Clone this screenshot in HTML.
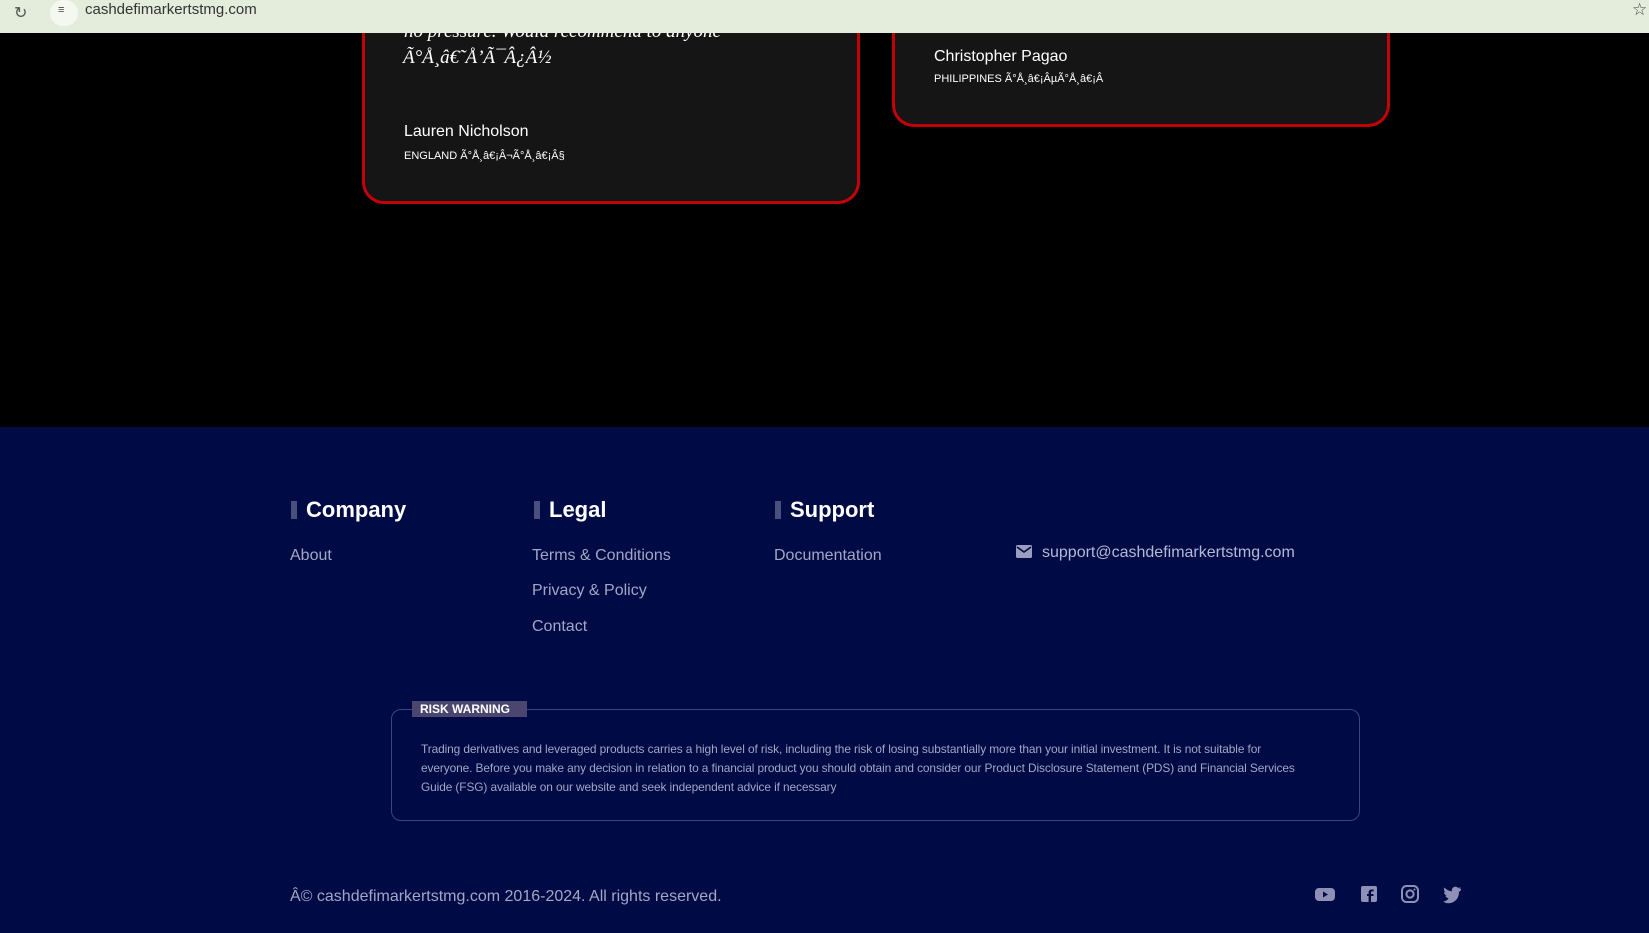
<!DOCTYPE html>
<html><head><meta charset="utf-8"><style>
*{margin:0;padding:0;box-sizing:border-box}
body{width:1649px;height:933px;overflow:hidden;background:#000;font-family:"Liberation Sans",sans-serif;position:relative}
.abs{position:absolute;white-space:nowrap}
.bar{position:absolute;left:0;top:0;width:1649px;height:33px;background:#e4ecdc;z-index:5}
.card{position:absolute;background:#151515;border:3px solid #c4000a;border-top:none;border-radius:0 0 22px 22px}
.nm{color:#fff;font-size:16px}
.cn{color:#fff;font-size:11px}
footer{position:absolute;left:0;top:427px;width:1649px;height:506px;background:#000a45}
.h{color:#fff;font-size:22px;font-weight:bold}
.h::before{content:"";position:absolute;left:-15px;top:4px;width:6px;height:18px;background:#4a4f7e}
.l{color:#a3a6c4;font-size:16px}
</style></head><body>
<div class="bar">
<div class="abs" style="left:14px;top:3px;font-size:16px;color:#555">&#8635;</div>
<div class="abs" style="left:50px;top:0;width:28px;height:26px;border-radius:13px;background:#f5f8f0"></div>
<div class="abs" style="left:58px;top:4px;font-size:11px;color:#444">&#8801;</div>
<div class="abs" style="left:85px;top:1px;font-size:15px;color:#333">cashdefimarkertstmg.com</div>
<div class="abs" style="left:1632px;top:0;font-size:17px;color:#444">&#9734;</div>
</div>
<div class="card" style="left:362px;top:0;width:498px;height:204px"></div>
<div class="card" style="left:892px;top:0;width:498px;height:127px"></div>
<div class="abs" style="left:404px;top:21px;color:#fff;font-family:'Liberation Serif',serif;font-style:italic;font-size:19px">no pressure. Would recommend to anyone</div>
<div class="abs" style="left:403px;top:47px;color:#fff;font-family:'Liberation Serif',serif;font-style:italic;font-size:19px">Ã°Å¸â€˜Å’Ã¯Â¿Â½</div>
<div class="abs nm" style="left:404px;top:123px">Lauren Nicholson</div>
<div class="abs cn" style="left:404px;top:150px">ENGLAND Ã°Å¸â€¡Â¬Ã°Å¸â€¡Â§</div>
<div class="abs nm" style="left:934px;top:48px">Christopher Pagao</div>
<div class="abs cn" style="left:934px;top:73px">PHILIPPINES Ã°Å¸â€¡ÂµÃ°Å¸â€¡Â­</div>
<footer>
<div class="abs h" style="left:306px;top:70px">Company</div>
<div class="abs h" style="left:549px;top:70px">Legal</div>
<div class="abs h" style="left:790px;top:70px">Support</div>
<div class="abs l" style="left:290px;top:120px">About</div>
<div class="abs l" style="left:532px;top:120px">Terms &amp; Conditions</div>
<div class="abs l" style="left:532px;top:155px">Privacy &amp; Policy</div>
<div class="abs l" style="left:532px;top:191px">Contact</div>
<div class="abs l" style="left:774px;top:120px">Documentation</div>
<svg class="abs" style="left:1016px;top:118px" width="16" height="13" viewBox="0 0 16 13"><rect width="16" height="13" rx="1.5" fill="#9a9dbd"/><path d="M1 2l7 5 7-5" stroke="#000a45" stroke-width="1.6" fill="none"/></svg>
<div class="abs l" style="left:1042px;top:117px;color:#b5b8d4">support@cashdefimarkertstmg.com</div>
<div class="abs" style="left:391px;top:282px;width:969px;height:112px;border:1px solid #3f4480;border-radius:10px"></div>
<div class="abs" style="left:412px;top:274px;width:115px;height:16px;background:#4a4670;color:#fff;font-size:12px;font-weight:bold;padding:1px 0 0 8px">RISK WARNING</div>
<div class="abs" style="left:421px;top:313px;color:#a3a6c4;font-size:11.9px;line-height:19px;white-space:normal;width:920px;letter-spacing:-0.1px">Trading derivatives and leveraged products carries a high level of risk, including the risk of losing substantially more than your initial investment. It is not suitable for<br>everyone. Before you make any decision in relation to a financial product you should obtain and consider our Product Disclosure Statement (PDS) and Financial Services<br>Guide (FSG) available on our website and seek independent advice if necessary</div>
<div class="abs l" style="left:290px;top:461px;color:#a3a6c4">Â© cashdefimarkertstmg.com 2016-2024. All rights reserved.</div>
<svg class="abs" style="left:1314px;top:457px" width="150" height="20" viewBox="0 0 150 20" fill="#8e91b5">
<rect x="1" y="4" width="20" height="13" rx="4"/><path d="M9 7.5v6l5-3z" fill="#000a45"/>
<rect x="47" y="2" width="16" height="16" rx="2"/><path d="M57 18v-6h2.5v-2H57V8.6c0-.8.4-1.2 1.2-1.2h1.4V5.5h-2c-2 0-3 1.2-3 3V10h-1.6v2h1.6v6z" fill="#000a45"/>
<rect x="88" y="2" width="16" height="16" rx="4.5" fill="none" stroke="#8e91b5" stroke-width="2"/><circle cx="96" cy="10" r="3.6" fill="none" stroke="#8e91b5" stroke-width="2"/><circle cx="100.5" cy="5.5" r="1"/>
<path d="M147 4.5c-.7.3-1.4.5-2.1.6.8-.5 1.3-1.2 1.6-2-.7.4-1.5.7-2.3.9a3.6 3.6 0 0 0-6.2 3.3c-3-.1-5.7-1.6-7.5-3.8-1 1.7-.5 3.8 1.1 4.9-.6 0-1.1-.2-1.6-.5 0 1.8 1.2 3.3 2.9 3.6-.5.2-1.1.2-1.6.1.5 1.5 1.8 2.5 3.4 2.5A7.3 7.3 0 0 1 129 17.6 10.3 10.3 0 0 0 144.9 8.5V8c.8-.5 1.5-1.2 2.1-1.9z"/>
</svg>
</footer>
</body></html>
